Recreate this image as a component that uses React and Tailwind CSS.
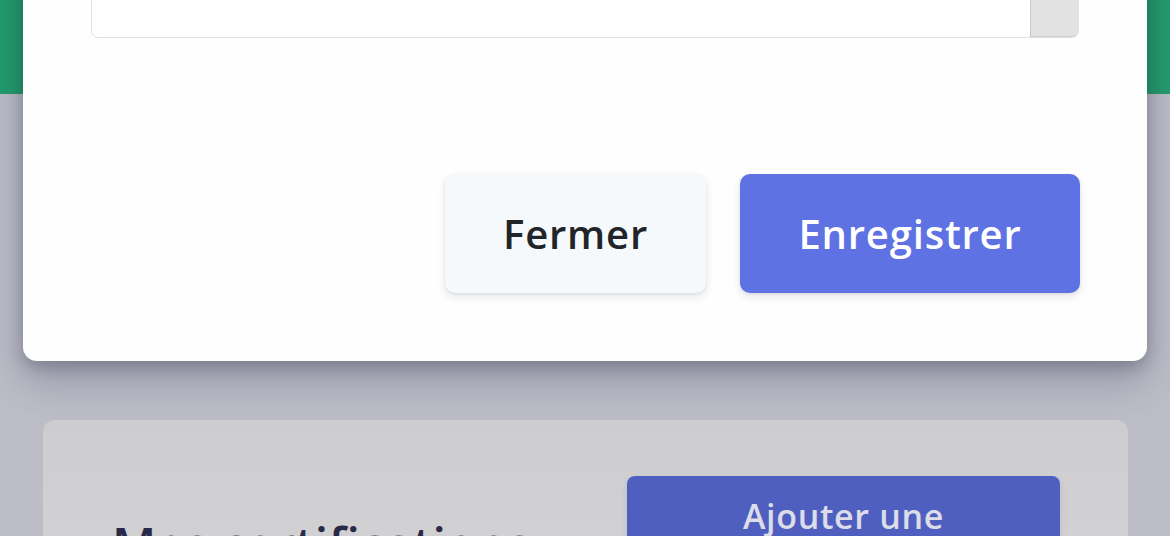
import React from "react";

const App = () => {
  return (
    <div
      className="relative w-[1170px] h-[536px] overflow-hidden bg-[#bcbdc6]"
      style={{ fontFamily: "'Open Sans', 'Noto Sans', sans-serif" }}
    >
      {/* Page behind the modal (already dimmed by the backdrop) */}
      <div className="h-[94px] bg-[#229c6c]" />
      <div className="pl-[43px] pr-[42px] pt-[326px]">
        <div className="rounded-[12px] bg-gradient-to-b from-[#cdcdd0] to-[#d7d7d9] pl-[69px] pr-[68px] pt-[56px] flex justify-between items-start h-[300px]">
          <h2 className="mt-[45px] text-[48px] font-semibold text-[#2a2a48] leading-none tracking-[0.01em]">
            Mes certifications
          </h2>
          <button className="w-[433px] h-[160px] rounded-[8px] bg-[#4f5fc0] text-[#dcdde8] text-[34px] font-semibold leading-[51px] tracking-[0.02em] pt-[15px] px-[60px] flex justify-center items-start text-center shadow-[0_4px_6px_rgba(50,50,93,0.11)]">
            Ajouter une certification
          </button>
        </div>
      </div>

      {/* Modal */}
      <div className="absolute left-[23px] right-[23px] top-[-200px] h-[561px] rounded-[14px] bg-[#fefefe] shadow-[0_18px_40px_rgba(50,50,93,0.3),0_6px_16px_rgba(0,0,0,0.2)] px-[68px] flex flex-col">
        <div className="mt-[80px] h-[158px] rounded-[7px] border border-[#dee2e6] bg-white flex justify-end overflow-hidden">
          <div className="w-[48px] h-full bg-[#e2e2e2] border-l border-[#c9c9c9] rounded-br-[6px] shadow-[inset_0_-1px_0_#cfcfcf]" />
        </div>
        <div className="mt-[136px] mr-[-1px] flex justify-end gap-[34px]">
          <button className="w-[261px] h-[119px] rounded-[10px] bg-[#f6f9fc] text-[#212529] text-[40px] font-semibold tracking-[0.02em] shadow-[0_4px_8px_rgba(50,50,93,0.11),0_1px_3px_rgba(0,0,0,0.08)]">
            Fermer
          </button>
          <button className="w-[340px] h-[119px] rounded-[10px] bg-[#5e72e4] text-white text-[40px] font-semibold tracking-[0.02em] shadow-[0_4px_8px_rgba(50,50,93,0.11),0_1px_3px_rgba(0,0,0,0.08)]">
            Enregistrer
          </button>
        </div>
      </div>
    </div>
  );
};

export default App;
